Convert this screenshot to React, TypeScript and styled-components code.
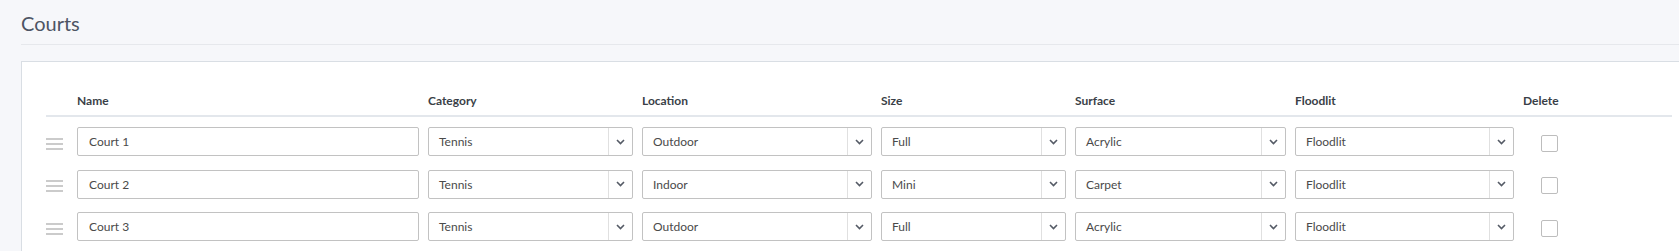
import React from 'react'
import styled, { createGlobalStyle } from 'styled-components'

const GlobalStyle = createGlobalStyle`
  html, body {
    margin: 0;
    padding: 0;
    background: #f6f7fa;
    overflow: hidden;
  }
  body {
    font-family: Lato, "Open Sans", "Liberation Sans", sans-serif;
  }
`

const Page = styled.div`
  padding-left: 21px;
  width: 1700px;
`

const PageHeader = styled.div`
  padding: 11px 0 9px;
  border-bottom: 1px solid #e6e8ec;
`

const Title = styled.h1`
  margin: 0;
  font-size: 20px;
  line-height: 24px;
  font-weight: 400;
  color: #4d5464;
`

const Panel = styled.div`
  margin-top: 16px;
  background: #ffffff;
  border: 1px solid #d9dee4;
  padding: 31px 0 20px 24px;
  height: 260px;
`

const Table = styled.div`
  width: 1626px;
`

const Row = styled.div`
  display: grid;
  grid-template-columns: 31px 351px 214px 239px 194px 220px 228px 1fr;
  align-items: center;
`

const HeaderRow = styled(Row)`
  padding-bottom: 6px;
  border-bottom: 2px solid #e3e7ec;
  margin-bottom: 10px;
`

const Rows = styled.div`
  display: flex;
  flex-direction: column;
  gap: 13.5px;
`

const HeadCell = styled.div`
  font-size: 12px;
  line-height: 16px;
  font-weight: 700;
  color: #3a3f47;
`

const Cell = styled.div`
  padding-right: 9px;
`

const Handle = styled.div`
  display: flex;
  flex-direction: column;
  gap: 3px;
  width: 17px;
  margin-top: 4px;
  cursor: grab;
  span {
    display: block;
    height: 2px;
    background: #cbcbcb;
  }
`

const TextInput = styled.input`
  box-sizing: border-box;
  width: 100%;
  height: 29px;
  border: 1px solid #c2c2c2;
  border-radius: 2px;
  padding: 0 11px;
  font-family: inherit;
  font-size: 12px;
  color: #4a4a4a;
  background: #fff;
  outline: none;
`

const SelectBox = styled.div`
  box-sizing: border-box;
  display: flex;
  width: 100%;
  height: 29px;
  border: 1px solid #c2c2c2;
  border-radius: 2px;
  background: #fff;
`

const SelectValue = styled.div`
  flex: 1;
  display: flex;
  align-items: center;
  padding-left: 10px;
  font-size: 12px;
  color: #4a4a4a;
`

const SelectArrow = styled.div`
  width: 23px;
  border-left: 1px solid #e0e0e0;
  display: flex;
  align-items: center;
  justify-content: center;
`

const CheckCell = styled.div`
  padding-left: 18px;
  padding-top: 3px;
  display: flex;
  align-items: center;
`

const Checkbox = styled.div`
  width: 17px;
  height: 17px;
  box-sizing: border-box;
  border: 1px solid #bdbdbd;
  border-radius: 2px;
  background: #fff;
`

const Chevron = () => (
  <svg width="9" height="6" viewBox="0 0 9 6">
    <path d="M1 1 L4.5 4.5 L8 1" fill="none" stroke="#555b66" strokeWidth="1.6" />
  </svg>
)

function Select({ value }: { value: string }) {
  return (
    <SelectBox>
      <SelectValue>{value}</SelectValue>
      <SelectArrow><Chevron /></SelectArrow>
    </SelectBox>
  )
}

const courts = [
  { name: 'Court 1', category: 'Tennis', location: 'Outdoor', size: 'Full', surface: 'Acrylic', floodlit: 'Floodlit' },
  { name: 'Court 2', category: 'Tennis', location: 'Indoor', size: 'Mini', surface: 'Carpet', floodlit: 'Floodlit' },
  { name: 'Court 3', category: 'Tennis', location: 'Outdoor', size: 'Full', surface: 'Acrylic', floodlit: 'Floodlit' },
]

export default function App() {
  return (
    <Page>
      <GlobalStyle />
      <PageHeader>
        <Title>Courts</Title>
      </PageHeader>
      <Panel>
        <Table>
          <HeaderRow>
            <div />
            <HeadCell>Name</HeadCell>
            <HeadCell>Category</HeadCell>
            <HeadCell>Location</HeadCell>
            <HeadCell>Size</HeadCell>
            <HeadCell>Surface</HeadCell>
            <HeadCell>Floodlit</HeadCell>
            <HeadCell>Delete</HeadCell>
          </HeaderRow>
          <Rows>
            {courts.map((court) =>
              <Row key={court.name}>
                <Handle><span /><span /><span /></Handle>
                <Cell><TextInput defaultValue={court.name} /></Cell>
                <Cell><Select value={court.category} /></Cell>
                <Cell><Select value={court.location} /></Cell>
                <Cell><Select value={court.size} /></Cell>
                <Cell><Select value={court.surface} /></Cell>
                <Cell><Select value={court.floodlit} /></Cell>
                <CheckCell><Checkbox /></CheckCell>
              </Row>
            )}
          </Rows>
        </Table>
      </Panel>
    </Page>
  )
}
